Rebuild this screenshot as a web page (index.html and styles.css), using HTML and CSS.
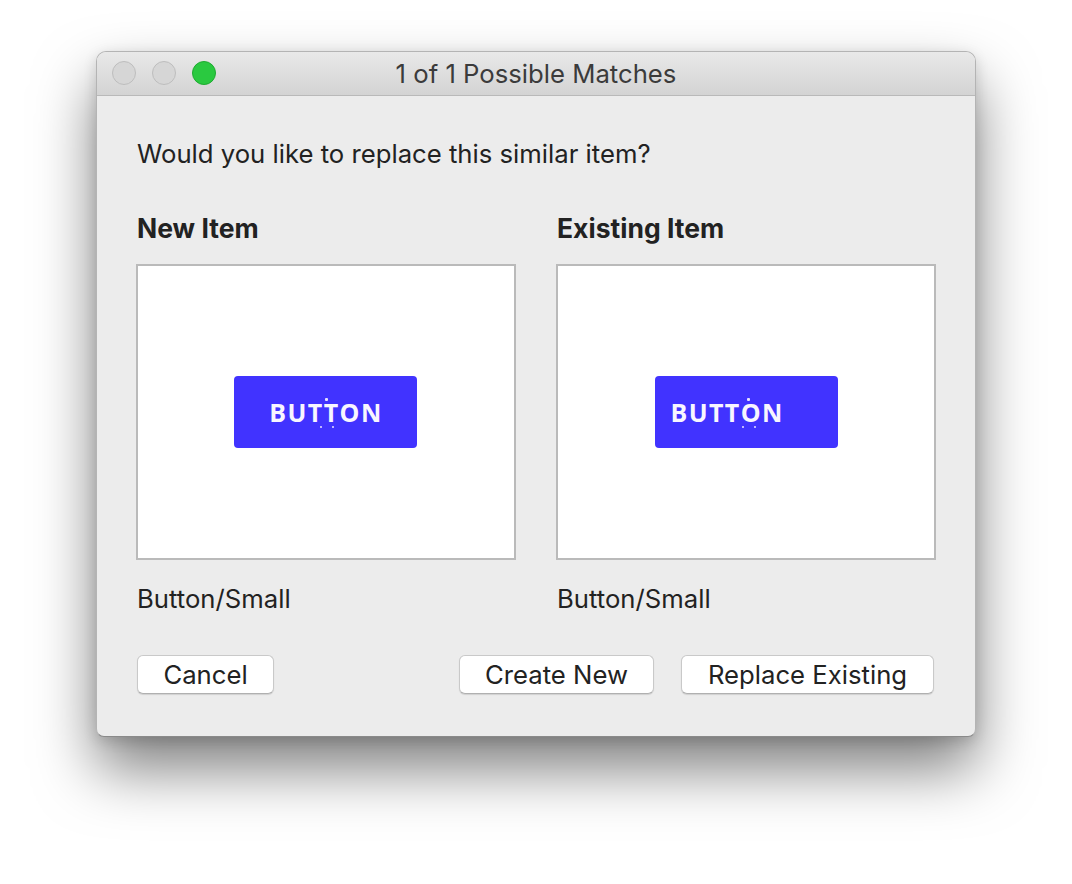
FILE: index.html
```html
<!DOCTYPE html>
<html>
<head>
<meta charset="utf-8">
<link rel="stylesheet" href="styles.css">
<title>1 of 1 Possible Matches</title>
</head>
<body>
<div class="stage">
  <div class="window">
    <div class="titlebar">
      <div class="lights">
        <span class="light"></span>
        <span class="light"></span>
        <span class="light green"></span>
      </div>
      <div class="title">1 of 1 Possible Matches</div>
    </div>
    <div class="content">
      <p class="question">Would you like to replace this similar item?</p>
      <div class="columns">
        <div class="col">
          <h2 class="heading">New Item</h2>
          <div class="preview">
            <div class="sym"><span class="sym-text">BUTTON</span><i class="dot d1"></i><i class="dot d2"></i><i class="dot d3"></i></div>
          </div>
          <div class="label">Button/Small</div>
        </div>
        <div class="col">
          <h2 class="heading">Existing Item</h2>
          <div class="preview">
            <div class="sym sym-left"><span class="sym-text">BUTTON</span><i class="dot e1"></i><i class="dot e2"></i><i class="dot e3"></i></div>
          </div>
          <div class="label">Button/Small</div>
        </div>
      </div>
      <div class="actions">
        <button class="btn btn-cancel">Cancel</button>
        <div class="actions-right">
          <button class="btn btn-create">Create New</button>
          <button class="btn btn-replace">Replace Existing</button>
        </div>
      </div>
    </div>
  </div>
</div>
</body>
</html>
```
FILE: styles.css
```css
html, body {
  margin: 0;
  padding: 0;
  background: #ffffff;
}

body {
  width: 1072px;
  height: 884px;
  overflow: hidden;
  font-family: Inter, "Liberation Sans", sans-serif;
  color: #222222;
}

.stage {
  padding: 51px 0 0 96px;
}

.window {
  box-sizing: border-box;
  width: 880px;
  height: 686px;
  background: #ececec;
  border: 1px solid #b4b4b4;
  border-bottom-color: #8a8a8a;
  border-radius: 10px 10px 8px 8px;
  box-shadow: 0 32px 60px rgba(0, 0, 0, 0.5), 0 4px 14px rgba(0, 0, 0, 0.14);
  overflow: hidden;
}

.titlebar {
  position: relative;
  height: 43px;
  background: linear-gradient(#e9e9e9, #d3d3d3);
  border-bottom: 1px solid #b9b9b9;
  display: flex;
  align-items: center;
  justify-content: center;
}

.lights {
  position: absolute;
  left: 15px;
  top: 9px;
  display: flex;
  gap: 16px;
}

.light {
  box-sizing: border-box;
  width: 24px;
  height: 24px;
  border-radius: 50%;
  background: #d6d6d6;
  border: 1px solid #bdbdbd;
}

.light.green {
  background: #2ac940;
  border-color: #1faa31;
}

.title {
  font-size: 25.7px;
  color: #3b3b3b;
  line-height: 30px;
  margin-top: 1px;
}

.content {
  padding: 42px 39px 0 39px;
}

.question {
  margin: 0;
  font-size: 25.7px;
  line-height: 32px;
  padding-left: 1px;
}

.columns {
  display: flex;
  gap: 40px;
  margin-top: 42px;
}

.col {
  width: 380px;
  display: flex;
  flex-direction: column;
}

.heading {
  margin: 0;
  font-size: 26.5px;
  font-weight: 700;
  line-height: 32px;
  padding-left: 1px;
}

.preview {
  box-sizing: border-box;
  margin-top: 20px;
  width: 380px;
  height: 296px;
  background: #ffffff;
  border: 2px solid #bababa;
  display: flex;
  align-items: center;
  justify-content: center;
}

.sym {
  position: relative;
  width: 183px;
  height: 72px;
  background: #4133ff;
  border-radius: 4px;
  display: flex;
  align-items: center;
  justify-content: center;
  margin-left: -1px;
  padding-left: 1px;
  box-sizing: border-box;
}

.sym-left {
  justify-content: flex-start;
  padding-left: 16px;
  margin-left: 0;
}

.sym-text {
  font-family: "Open Sans", sans-serif;
  font-weight: 700;
  font-size: 25px;
  letter-spacing: 1.4px;
  color: #f8f6ff;
  line-height: 1;
}

.dot {
  position: absolute;
  width: 2px;
  height: 2px;
  background: #e6e0ff;
  border-radius: 1px;
}

.d1 { left: 91px; top: 22px; width: 3px; height: 3px; }
.d2 { left: 86px; top: 50px; }
.d3 { left: 98px; top: 50px; }
.e1 { left: 92px; top: 22px; width: 3px; height: 3px; }
.e2 { left: 87px; top: 50px; }
.e3 { left: 99px; top: 50px; }

.label {
  margin-top: 23px;
  font-size: 25.7px;
  line-height: 32px;
  padding-left: 1px;
}

.actions {
  margin-top: 40px;
  display: flex;
  justify-content: space-between;
  padding: 0 2px 0 1px;
}

.actions-right {
  display: flex;
  gap: 27px;
}

.btn {
  box-sizing: border-box;
  height: 39px;
  padding: 0;
  background: #ffffff;
  border: 1px solid #c9c9c9;
  border-bottom-color: #b0b0b0;
  border-radius: 6px;
  box-shadow: 0 1px 1px rgba(0, 0, 0, 0.12);
  font-family: Inter, "Liberation Sans", sans-serif;
  font-size: 25.7px;
  color: #222222;
  line-height: 36px;
  text-align: center;
}

.btn-cancel { width: 137px; }
.btn-create { width: 195px; }
.btn-replace { width: 253px; }
```
